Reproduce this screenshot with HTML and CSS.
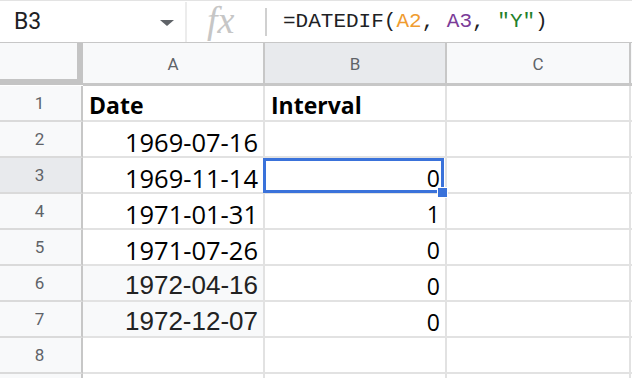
FILE: index.html
```html
<!DOCTYPE html>
<html>
<head>
<meta charset="utf-8">
<link rel="stylesheet" href="styles.css">
</head>
<body>
<div class="app">
  <div class="fbar">
    <div class="namebox">
      <span class="ref">B3</span>
      <svg class="caret" width="14" height="6" viewBox="0 0 14 6"><polygon points="0,0 14,0 7,6" fill="#5f6368"/></svg>
    </div>
    <div class="sep sep1"></div>
    <div class="fx">fx</div>
    <div class="sep sep2"></div>
    <div class="formula">=DATEDIF(<span class="c-o">A2</span>, <span class="c-p">A3</span>, <span class="c-g">"Y"</span>)</div>
  </div>
  <div class="grid">
    <div class="corner"></div>
    <div class="colhead">A</div>
    <div class="colhead sel">B</div>
    <div class="colhead">C</div>
    <div class="colhead rest"></div>

    <div class="rowhead">1</div>
    <div class="cell bold left">Date</div>
    <div class="cell bold left">Interval</div>
    <div class="cell"></div>
    <div class="cell rest"></div>

    <div class="rowhead">2</div>
    <div class="cell date">1969-07-16</div>
    <div class="cell"></div>
    <div class="cell"></div>
    <div class="cell rest"></div>

    <div class="rowhead sel">3</div>
    <div class="cell date">1969-11-14</div>
    <div class="cell num active">0<span class="selbox"></span><span class="handle"></span></div>
    <div class="cell"></div>
    <div class="cell rest"></div>

    <div class="rowhead">4</div>
    <div class="cell date">1971-01-31</div>
    <div class="cell num">1</div>
    <div class="cell"></div>
    <div class="cell rest"></div>

    <div class="rowhead">5</div>
    <div class="cell date">1971-07-26</div>
    <div class="cell num">0</div>
    <div class="cell"></div>
    <div class="cell rest"></div>

    <div class="rowhead">6</div>
    <div class="cell date alt">1972-04-16</div>
    <div class="cell num">0</div>
    <div class="cell"></div>
    <div class="cell rest"></div>

    <div class="rowhead">7</div>
    <div class="cell date alt">1972-12-07</div>
    <div class="cell num">0</div>
    <div class="cell"></div>
    <div class="cell rest"></div>

    <div class="rowhead">8</div>
    <div class="cell"></div>
    <div class="cell"></div>
    <div class="cell"></div>
    <div class="cell rest"></div>

    <div class="rowhead"></div>
    <div class="cell"></div>
    <div class="cell"></div>
    <div class="cell"></div>
    <div class="cell rest"></div>
  </div>
</div>
</body>
</html>
```

FILE: styles.css
```css
* { box-sizing: border-box; }
html, body { margin: 0; padding: 0; background: #fff; }
body { width: 632px; height: 378px; overflow: hidden; font-family: "Roboto", "Liberation Sans", sans-serif; }

.app { width: 632px; height: 378px; overflow: hidden; }

.fbar {
  height: 43px;
  border-top: 1px solid #e3e3e3;
  border-bottom: 1px solid #c7c7c7;
  display: flex;
  align-items: center;
}
.namebox {
  width: 185px;
  display: flex;
  align-items: center;
  justify-content: space-between;
  padding: 0 11px 0 14px;
}
.ref { font-size: 23px; color: #202124; }
.caret { margin-top: 2px; }
.sep { width: 1px; background: #e0e0e0; }
.sep1 { height: 40px; width: 2px; background: #ececec; }
.sep2 { height: 28px; width: 2px; background: #d0d0d0; }
.fx {
  width: 78px;
  padding-left: 20px;
  font-family: "Liberation Serif", serif;
  font-style: italic;
  font-size: 38px;
  color: #c6c6c6;
  line-height: 40px;
  height: 40px;
  margin-top: -4px;
}
.formula {
  padding-left: 16px;
  font-family: "Liberation Mono", monospace;
  font-size: 21px;
  color: #202124;
  white-space: pre;
}
.c-o { color: #f09c2f; }
.c-p { color: #7b3c98; }
.c-g { color: #237f2a; }

.grid {
  display: grid;
  grid-template-columns: 83px 182px 182px 184px 1fr;
  grid-template-rows: 43px repeat(9, 36px);
}
.corner {
  background: #f8f9fa;
  border-right: 6px solid #c4c4c4;
  border-bottom: 6px solid #c4c4c4;
  height: 42px;
}
.colhead {
  background: #f8f9fa;
  border-right: 2px solid #c7c7c7;
  border-bottom: 3px solid #c7c7c7;
  display: flex;
  align-items: center;
  justify-content: center;
  font-size: 17px;
  color: #5f6368;
  padding-top: 1px;
}
.colhead.sel { background: #e8eaed; }
.colhead.rest { border-right: none; }
.rowhead {
  background: #f8f9fa;
  border-right: 2px solid #c7c7c7;
  border-bottom: 2px solid #dadada;
  display: flex;
  align-items: center;
  justify-content: center;
  font-size: 17px;
  color: #5f6368;
  padding-right: 2px;
}
.rowhead.sel { background: #e8eaed; }
.cell {
  border-right: 2px solid #e2e2e2;
  border-bottom: 2px solid #e2e2e2;
  display: flex;
  align-items: flex-end;
  justify-content: flex-end;
  padding: 0 5px 1px 6px;
  font-family: "Open Sans", sans-serif;
  line-height: 1;
  color: #000;
  position: relative;
}
.cell.rest { border-right: none; }
.cell.left { justify-content: flex-start; }
.cell.bold { font-weight: 700; font-size: 23px; padding-bottom: 3px; }
.cell.date { font-size: 25.5px; }
.cell.num { font-size: 23px; padding-bottom: 2px; }
.cell.alt {
  background: #f8f9fa;
  font-family: "Liberation Sans", sans-serif;
  font-size: 26px;
  color: #222;
  padding-bottom: 2px;
}
.selbox {
  position: absolute;
  left: -2px;
  top: 0;
  right: 1px;
  bottom: -1px;
  border: 3px solid #3a72da;
  z-index: 2;
}
.handle {
  position: absolute;
  left: 172px;
  top: 29px;
  width: 11px;
  height: 11px;
  background: #3a72da;
  border: 1px solid #fff;
  z-index: 3;
}
```
